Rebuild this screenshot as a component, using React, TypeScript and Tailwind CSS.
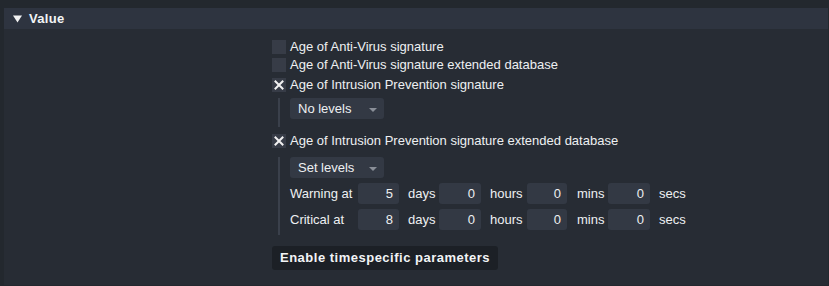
import React from "react";

const font = { fontFamily: '"Liberation Sans", Arial, sans-serif' };

function Check({ checked, label }: { checked?: boolean; label: string }) {
  return (
    <div className="flex items-center h-[19px]">
      <div className="w-[14px] h-[14px] bg-[#373c47] flex items-center justify-center">
        {checked && (
          <svg width="10" height="10" viewBox="0 0 10 10">
            <path d="M1.5 1.5 L8.5 8.5 M8.5 1.5 L1.5 8.5" stroke="#f2f2f2" strokeWidth="2" strokeLinecap="square" />
          </svg>
        )}
      </div>
      <span className="ml-[4px] text-[13px] text-[#eef0f2]">{label}</span>
    </div>
  );
}

function Drop({ label }: { label: string }) {
  return (
    <div className="w-[94px] h-[21px] rounded-[3px] bg-[#333944] flex items-center justify-between pl-[8px] pr-[7px]">
      <span className="text-[13px] text-[#eef0f2]">{label}</span>
      <svg width="8" height="5" viewBox="0 0 8 5" className="mt-[3px]">
        <path d="M0 0 L8 0 L4 4 Z" fill="#8a8f98" />
      </svg>
    </div>
  );
}

function Num({ v, w }: { v: string; w: string }) {
  return (
    <div className={`${w} h-[21px] rounded-[3px] bg-[#333944] flex items-center justify-end pr-[6px] text-[13px] text-[#eef0f2]`}>
      {v}
    </div>
  );
}

function TimeRow({ label, d }: { label: string; d: string }) {
  return (
    <div className="flex items-center h-[21px] text-[13px] text-[#eef0f2]">
      <span className="w-[68px]">{label}</span>
      <Num v={d} w="w-[41px]" />
      <span className="ml-[9px] w-[31px]">days</span>
      <Num v="0" w="w-[42px]" />
      <span className="ml-[9px] w-[37px]">hours</span>
      <Num v="0" w="w-[40px]" />
      <span className="ml-[10px] w-[31px]">mins</span>
      <Num v="0" w="w-[42px]" />
      <span className="ml-[9px]">secs</span>
    </div>
  );
}

export default function App() {
  return (
    <div className="w-[829px] h-[286px] bg-[#23282e] pt-[8px] pl-[4px] pr-[1px] pb-[1px]" style={font}>
      <div className="h-full flex flex-col">
        <div className="h-[21px] bg-[#2e3440] flex items-center pl-[9px]">
          <svg width="9" height="8" viewBox="0 0 9 8">
            <path d="M0 0.5 L9 0.5 L4.5 7.5 Z" fill="#f2f2f2" />
          </svg>
          <span className="ml-[7px] text-[13px] font-bold text-[#f2f4f6] tracking-[0.3px]">Value</span>
        </div>
        <div className="flex-1 bg-[#272c34] pl-[268px] pt-[8px]">
          <Check label="Age of Anti-Virus signature" />
          <div className="mt-[-1px]">
            <Check label="Age of Anti-Virus signature extended database" />
          </div>
          <div className="mt-[1px]">
            <Check checked label="Age of Intrusion Prevention signature" />
          </div>
          <div className="ml-[6px] mt-[4px] border-l-2 border-[#3a404b] pl-[10px] pb-[8px]">
            <Drop label="No levels" />
          </div>
          <div className="mt-[4px]">
            <Check checked label="Age of Intrusion Prevention signature extended database" />
          </div>
          <div className="ml-[6px] mt-[7px] border-l-2 border-[#3a404b] pl-[10px] pb-[5px] flex flex-col gap-[5px]">
            <Drop label="Set levels" />
            <TimeRow label="Warning at" d="5" />
            <TimeRow label="Critical at" d="8" />
          </div>
          <div className="mt-[11px] inline-flex h-[24px] items-center px-[8px] rounded-[3px] bg-[#1c2026] text-[13px] font-bold text-[#f2f4f6] tracking-[0.5px]">
            Enable timespecific parameters
          </div>
        </div>
      </div>
    </div>
  );
}
